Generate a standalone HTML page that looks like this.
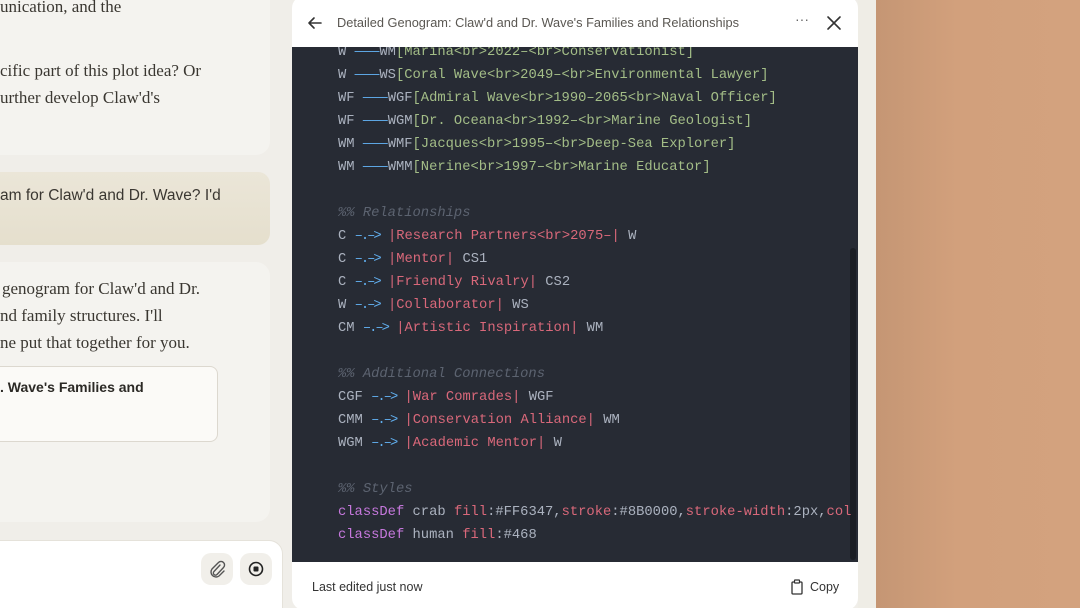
<!DOCTYPE html>
<html><head><style>
*{margin:0;padding:0;box-sizing:border-box}
html,body{width:1080px;height:608px;overflow:hidden}
body{background:#f0eee9;position:relative;font-family:"Liberation Serif",serif}
.abs{position:absolute}
.ser{font-family:"Liberation Serif",serif;font-size:17px;color:#3a3731;white-space:nowrap}
.sans{font-family:"Liberation Sans",sans-serif}
.code{font-family:"Liberation Mono",monospace;font-size:13.8px;white-space:pre;color:#abb2bf}
.b{color:#61afef}.a{color:#61afef;letter-spacing:-2px}.g{color:#a3bd87}.r{color:#d9687a}.c{color:#5c6370;font-style:italic}.p{color:#c678dd}
</style></head><body>
<div class="abs" style="left:876px;top:0;width:204px;height:608px;background:linear-gradient(90deg,#c59674,#d2a07c 40%,#d3a27e)"></div>
<div class="abs" style="left:858px;top:0;width:18px;height:608px;background:#efede6"></div>

<div class="abs" style="left:-20px;top:-20px;width:290px;height:175px;background:#f4f3ef;border-radius:14px"></div>
<div class="abs ser" style="left:0;top:-3px">unication, and the</div>
<div class="abs ser" style="left:0;top:61px">cific part of this plot idea? Or</div>
<div class="abs ser" style="left:0;top:88px">urther develop Claw'd's</div>

<div class="abs" style="left:-20px;top:172px;width:290px;height:73px;background:linear-gradient(180deg,#ebe6d8,#e5dfcd);border-radius:12px"></div>
<div class="abs sans" style="left:0;top:187px;font-size:15.5px;color:#3a3731;white-space:nowrap">am for Claw'd and Dr. Wave? I'd</div>

<div class="abs" style="left:-20px;top:262px;width:290px;height:260px;background:#f4f3ef;border-radius:14px"></div>
<div class="abs ser" style="left:2px;top:279px">genogram for Claw'd and Dr.</div>
<div class="abs ser" style="left:0;top:306px">nd family structures. I'll</div>
<div class="abs ser" style="left:0;top:333px">ne put that together for you.</div>
<div class="abs" style="left:-20px;top:366px;width:238px;height:76px;background:#fbfaf7;border:1px solid #dcd8cf;border-radius:8px"></div>
<div class="abs sans" style="left:0;top:379px;font-size:14px;font-weight:bold;color:#2b2925;white-space:nowrap">. Wave's Families and</div>

<div class="abs" style="left:-20px;top:540px;width:303px;height:90px;background:#fff;border:1px solid #e5e2da;border-radius:14px"></div>
<div class="abs" style="left:201px;top:553px;width:32px;height:32px;background:#f1efea;border-radius:10px"></div>
<div class="abs" style="left:240px;top:553px;width:32px;height:32px;background:#f1efea;border-radius:10px"></div>
<svg class="abs" style="left:207px;top:559px" width="20" height="20" viewBox="0 0 20 20"><path d="M13 6l-6 6.5a2 2 0 0 0 3 3l6.5-7a3.5 3.5 0 0 0-5-5L5 10a5 5 0 0 0 7 7l5-5" fill="none" stroke="#555" stroke-width="1.4" stroke-linecap="round"/></svg>
<svg class="abs" style="left:246px;top:559px" width="20" height="20" viewBox="0 0 20 20"><circle cx="10" cy="10" r="6.5" fill="none" stroke="#222" stroke-width="1.6"/><rect x="7.5" y="7.5" width="5" height="5" rx="1" fill="#222"/></svg>

<div class="abs" style="left:292px;top:-4px;width:566px;height:614px;background:#fff;border-radius:12px;overflow:hidden">
 <div class="abs" style="left:0;top:51px;width:566px;height:515px;background:#272b34"></div>
 <div class="abs" style="left:558px;top:252px;width:6px;height:312px;background:#1b1e24;border-radius:3px"></div>
</div>
<svg class="abs" style="left:306px;top:14px" width="18" height="18" viewBox="0 0 18 18"><path d="M15 9H3M8 4L3 9l5 5" fill="none" stroke="#333" stroke-width="1.6" stroke-linecap="round" stroke-linejoin="round"/></svg>
<div class="abs sans" style="left:337px;top:15px;font-size:12.8px;color:#5a5752;white-space:nowrap">Detailed Genogram: Claw'd and Dr. Wave's Families and Relationships</div>
<div class="abs sans" style="left:795px;top:11px;font-size:14px;color:#666">···</div>
<svg class="abs" style="left:826px;top:15px" width="16" height="16" viewBox="0 0 16 16"><path d="M2 2l12 12M14 2L2 14" stroke="#333" stroke-width="1.6" stroke-linecap="round"/></svg>

<div class="abs" style="left:292px;top:47px;width:560px;height:515px;overflow:hidden">
<div class="code" style="position:absolute;left:46px;top:-6px;line-height:23px">W <span class="b">———</span>WM<span class="g">[Marina&lt;br&gt;2022–&lt;br&gt;Conservationist]</span>
W <span class="b">———</span>WS<span class="g">[Coral Wave&lt;br&gt;2049–&lt;br&gt;Environmental Lawyer]</span>
WF <span class="b">———</span>WGF<span class="g">[Admiral Wave&lt;br&gt;1990–2065&lt;br&gt;Naval Officer]</span>
WF <span class="b">———</span>WGM<span class="g">[Dr. Oceana&lt;br&gt;1992–&lt;br&gt;Marine Geologist]</span>
WM <span class="b">———</span>WMF<span class="g">[Jacques&lt;br&gt;1995–&lt;br&gt;Deep-Sea Explorer]</span>
WM <span class="b">———</span>WMM<span class="g">[Nerine&lt;br&gt;1997–&lt;br&gt;Marine Educator]</span>

<span class="c">%% Relationships</span>
C <span class="a">–.–&gt;</span> <span class="r">|Research Partners&lt;br&gt;2075–|</span> W
C <span class="a">–.–&gt;</span> <span class="r">|Mentor|</span> CS1
C <span class="a">–.–&gt;</span> <span class="r">|Friendly Rivalry|</span> CS2
W <span class="a">–.–&gt;</span> <span class="r">|Collaborator|</span> WS
CM <span class="a">–.–&gt;</span> <span class="r">|Artistic Inspiration|</span> WM

<span class="c">%% Additional Connections</span>
CGF <span class="a">–.–&gt;</span> <span class="r">|War Comrades|</span> WGF
CMM <span class="a">–.–&gt;</span> <span class="r">|Conservation Alliance|</span> WM
WGM <span class="a">–.–&gt;</span> <span class="r">|Academic Mentor|</span> W

<span class="c">%% Styles</span>
<span class="p">classDef</span> crab <span class="r">fill</span>:#FF6347,<span class="r">stroke</span>:#8B0000,<span class="r">stroke-width</span>:2px,<span class="r">color</span>
<span class="p">classDef</span> human <span class="r">fill</span>:#468</div>
</div>

<div class="abs sans" style="left:312px;top:580px;font-size:12.5px;color:#333">Last edited just now</div>
<svg class="abs" style="left:790px;top:579px" width="14" height="16" viewBox="0 0 14 16"><rect x="2" y="3" width="10" height="12" rx="1" fill="none" stroke="#333" stroke-width="1.3"/><rect x="4.5" y="1" width="5" height="3" rx="0.5" fill="#fff" stroke="#333" stroke-width="1.2"/></svg>
<div class="abs sans" style="left:810px;top:580px;font-size:12.5px;color:#333">Copy</div>
</body></html>
